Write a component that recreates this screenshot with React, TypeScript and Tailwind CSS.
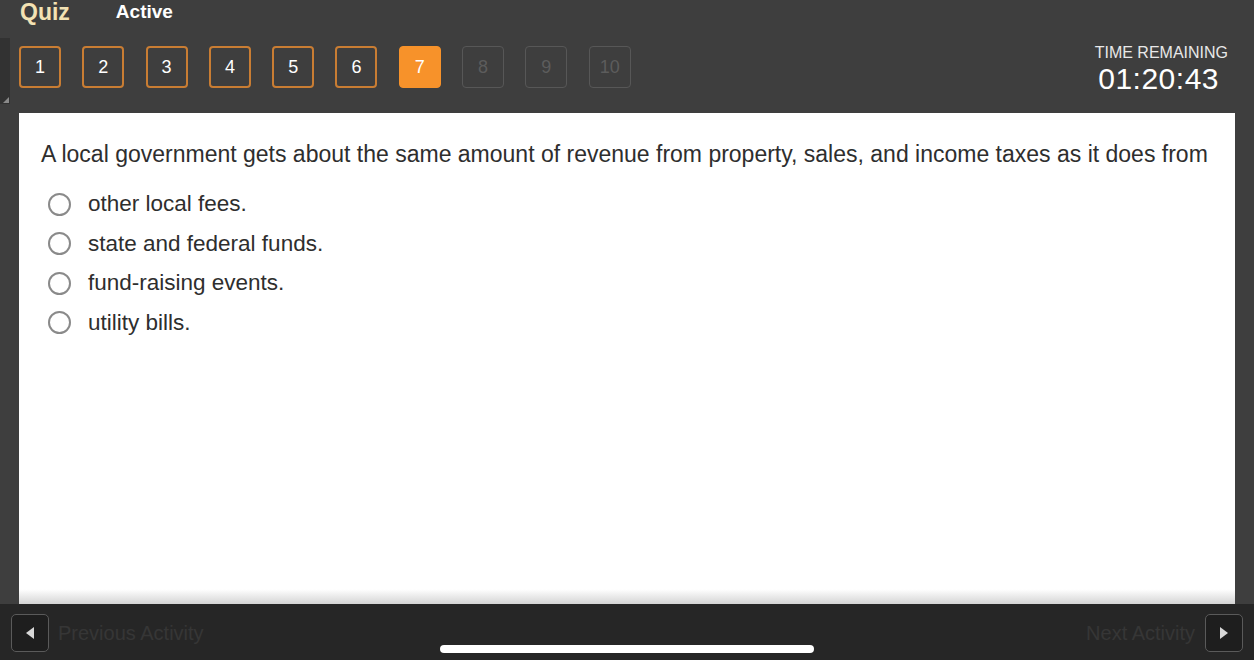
const pages = [1, 2, 3, 4, 5, 6, 7, 8, 9, 10];
const current = 7;

const options = [
  "other local fees.",
  "state and federal funds.",
  "fund-raising events.",
  "utility bills.",
];

function PageButton({ n }: { n: number }) {
  if (n === current) {
    return (
      <div className="w-[42px] h-[42px] rounded-[4px] bg-[#f7922a] border border-[#f7922a] flex items-center justify-center text-[18px] text-white">
        {n}
      </div>
    );
  }
  if (n > current) {
    return (
      <div className="w-[42px] h-[42px] rounded-[4px] border border-[#575757] flex items-center justify-center text-[18px] text-[#5c5c5c]">
        {n}
      </div>
    );
  }
  return (
    <div className="w-[42px] h-[42px] rounded-[4px] border-2 border-[#c97d33] flex items-center justify-center text-[18px] text-white">
      {n}
    </div>
  );
}

export default function App() {
  return (
    <div className="w-[1254px] h-[660px] overflow-hidden bg-[#3e3e3e] flex flex-col font-['Liberation_Sans',Arial,sans-serif]">
      {/* header */}
      <div className="h-[24px] flex items-center gap-[46px] pl-[20px]">
        <span className="text-[23px] font-bold text-[#f3e2b3] leading-[24px]">Quiz</span>
        <span className="text-[19px] font-bold text-white leading-[24px]">Active</span>
      </div>

      <div className="flex h-[89px]">
        <div className="relative w-[10px] h-[66px] mt-[14px] bg-[#323232]">
          <span className="absolute right-[1px] bottom-[1px] w-0 h-0 border-l-[6px] border-l-transparent border-b-[6px] border-b-[#8a8a8a]" />
        </div>
        <div className="flex gap-[21.3px] ml-[9px] mt-[22px] h-[42px]">
          {pages.map((n) => (
            <PageButton key={n} n={n} />
          ))}
        </div>
        <div className="ml-auto mr-[26px] mt-[20px] flex flex-col items-end">
          <span className="text-[16px] text-[#e8e8e8] leading-[18px]">TIME REMAINING</span>
          <span className="text-[30px] text-white leading-[34px] mr-[9px] tracking-[0.5px]">01:20:43</span>
        </div>
      </div>

      {/* content */}
      <div className="flex-1 flex px-[19px] min-h-0">
        <div className="flex-1 bg-white bg-gradient-to-b from-white from-[97%] to-[#d4d4d4] pl-[22px] pt-[28px]">
          <p className="text-[23px] text-[#2e2e2e] leading-[26px] whitespace-nowrap">
            A local government gets about the same amount of revenue from property, sales, and income taxes as it does from
          </p>
          <div className="mt-[25px] flex flex-col gap-[15.5px]">
            {options.map((o) => (
              <label key={o} className="flex items-center h-[24px]">
                <span className="w-[23px] h-[23px] rounded-full border-2 border-[#8a8a8a] ml-[7px]" />
                <span className="ml-[17px] text-[22.5px] text-[#2e2e2e] leading-[24px]">{o}</span>
              </label>
            ))}
          </div>
        </div>
      </div>

      {/* footer */}
      <div className="relative h-[56px] bg-[#262626] flex items-center px-[11px] pt-[2px]">
        <button className="w-[38px] h-[38px] rounded-[5px] border border-[#5a5a5a] bg-[#1e1e1e] flex items-center justify-center">
          <span className="w-0 h-0 border-t-[6px] border-t-transparent border-b-[6px] border-b-transparent border-r-[8px] border-r-[#d8d8d8]" />
        </button>
        <span className="ml-[9px] text-[20px] text-[#363636]">Previous Activity</span>
        <span className="ml-auto mr-[10px] text-[20px] text-[#363636]">Next Activity</span>
        <button className="w-[38px] h-[38px] rounded-[5px] border border-[#5a5a5a] bg-[#1e1e1e] flex items-center justify-center">
          <span className="w-0 h-0 border-t-[6px] border-t-transparent border-b-[6px] border-b-transparent border-l-[8px] border-l-[#d8d8d8]" />
        </button>
        <span className="absolute left-[440px] bottom-[7px] w-[374px] h-[8px] rounded-full bg-white" />
      </div>
    </div>
  );
}
